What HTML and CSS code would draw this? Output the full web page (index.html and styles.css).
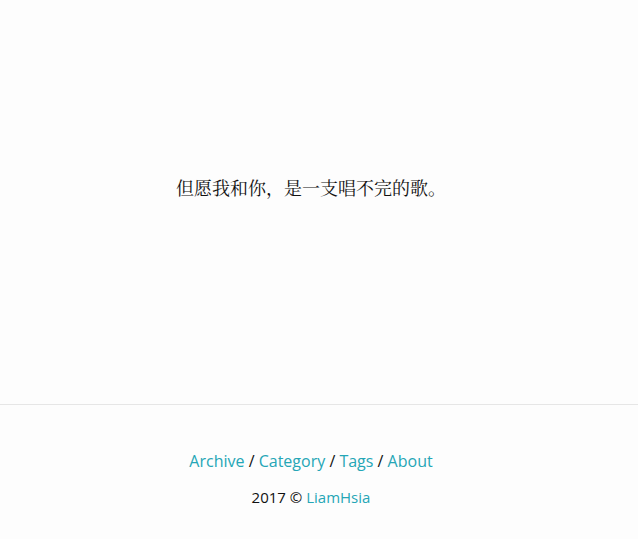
FILE: index.html
```html
<!DOCTYPE html>
<html lang="zh-CN">
<head>
<meta charset="utf-8">
<title>LiamHsia</title>
<link rel="stylesheet" href="styles.css">
</head>
<body>
<main class="main">
  <p class="quote">但愿我和你，是一支唱不完的歌。</p>
</main>
<footer class="footer">
  <nav class="nav"><a href="#">Archive</a> <span class="sep">/</span> <a href="#">Category</a> <span class="sep">/</span> <a href="#">Tags</a> <span class="sep">/</span> <a href="#">About</a></nav>
  <p class="copy">2017 © <a href="#">LiamHsia</a></p>
</footer>
</body>
</html>
```
FILE: styles.css
```css
html, body {
  margin: 0;
  padding: 0;
  background: #fdfdfd;
  color: #111;
}
body {
  height: 539px;
  overflow: hidden;
}
.main {
  box-sizing: border-box;
  height: 404px;
  padding: 174px 16px 0 0;
  text-align: center;
}
.quote {
  margin: 0;
  font-family: "Noto Serif CJK SC", "Noto Sans CJK SC", serif;
  font-size: 18px;
  line-height: 27px;
  color: #111;
}
.footer {
  border-top: 1px solid #e6e6e6;
  padding: 44px 16px 0 0;
  text-align: center;
  font-family: "Open Sans", "Noto Sans", sans-serif;
  font-size: 16px;
  line-height: 24px;
}
.nav {
  margin: 0;
}
.footer a {
  color: #25a6b6;
  text-decoration: none;
}
.sep {
  color: #111;
}
.copy {
  margin: 12px 0 0;
  font-size: 15px;
}
```
